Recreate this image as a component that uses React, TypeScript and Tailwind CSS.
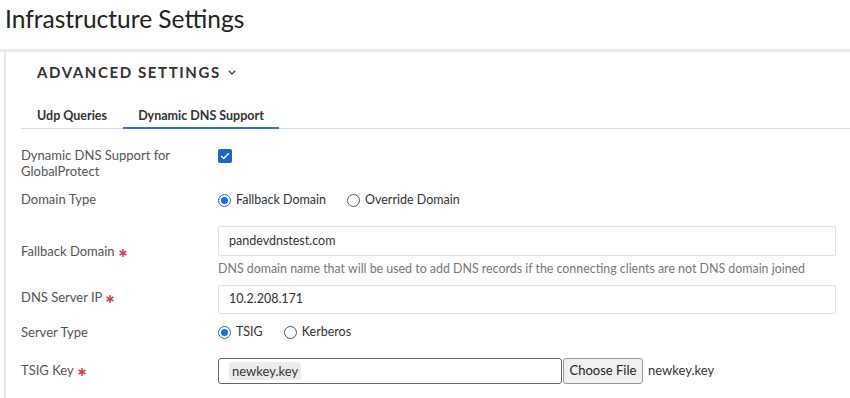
import React from "react";

const Star = () => (
  <svg className="ml-[4px] relative top-[1px]" width="8" height="8" viewBox="0 0 8 8">
    <g stroke="#d64545" strokeWidth="1.6" strokeLinecap="round">
      <path d="M4 0.6v6.8" />
      <path d="M1.05 2.3l5.9 3.4" />
      <path d="M1.05 5.7l5.9-3.4" />
    </g>
  </svg>
);

function Radio({ checked, label }: { checked?: boolean; label: string }) {
  return (
    <span className="flex items-center gap-[5px]">
      {checked ? (
        <span className="w-[13px] h-[13px] rounded-full border-[1.5px] border-[#1a6fe0] flex items-center justify-center bg-white">
          <span className="w-[7px] h-[7px] rounded-full bg-[#1a6fe0]" />
        </span>
      ) : (
        <span className="w-[13px] h-[13px] rounded-full border border-[#555] bg-white" />
      )}
      <span className="text-[12.5px] text-[#333]">{label}</span>
    </span>
  );
}

export default function App() {
  return (
    <div className="w-[850px] h-[398px] bg-white overflow-hidden text-[#555]" style={{ fontFamily: "Lato, 'Open Sans', sans-serif" }}>
      <div className="h-[49px] pl-[5px] pt-[4px] text-[24.5px] leading-[30px] text-[#222]">Infrastructure Settings</div>
      <div className="border-t-[3px] border-[#ececec]">
        <div className="ml-[4px] border-l-2 border-[#e6e6e6] h-[400px] pl-[15px]">
          <div className="pl-[16px] pt-[10px] h-[48px] flex items-start">
            <span className="text-[15px] leading-[20px] font-bold tracking-[1.6px] text-[#333]">ADVANCED SETTINGS</span>
            <svg className="ml-[7px] mt-[8px]" width="8" height="5" viewBox="0 0 8 5"><path d="M0.8 0.8l3.2 3.2L7.2 0.8" fill="none" stroke="#444" strokeWidth="1.3" /></svg>
          </div>
          <div className="flex border-b border-[#dcdcdc] h-[29px] items-end">
            <div className="pl-[16px] w-[102px] h-full flex items-center pt-[4px] text-[12.5px] font-bold text-[#333]">Udp Queries</div>
            <div className="w-[156px] h-full flex items-center pt-[4px] justify-center text-[12.5px] font-bold text-[#333] border-b-2 border-[#2f78c8] mb-[-1px]">Dynamic DNS Support</div>
          </div>
          <div className="grid grid-cols-[197px_618px] text-[13px]">
            <div className="pt-[18px] leading-[16px]">Dynamic DNS Support for<br />GlobalProtect</div>
            <div className="pt-[20px]">
              <span className="w-[14px] h-[14px] rounded-[2px] bg-[#1a66c9] flex items-center justify-center">
                <svg width="10" height="8" viewBox="0 0 10 8"><path d="M1.2 4l2.5 2.4L8.8 1.3" fill="none" stroke="white" strokeWidth="1.4" /></svg>
              </span>
            </div>

            <div className="h-[42px] flex items-center">Domain Type</div>
            <div className="h-[42px] flex items-center gap-[21px]">
              <Radio checked label="Fallback Domain" />
              <Radio label="Override Domain" />
            </div>

            <div className="flex items-center">Fallback Domain<Star /></div>
            <div className="pt-[5px]">
              <div className="h-[30px] border border-[#e0e0e0] rounded-[2px] flex items-center pl-[10px] text-[12.5px] text-[#333]">pandevdnstest.com</div>
              <div className="pt-[4px] h-[26px] text-[12.4px] text-[#777]">DNS domain name that will be used to add DNS records if the connecting clients are not DNS domain joined</div>
            </div>

            <div className="flex items-center">DNS Server IP<Star /></div>
            <div className="pt-[3px]">
              <div className="h-[29px] border border-[#e0e0e0] rounded-[2px] flex items-center pl-[10px] text-[12.5px] text-[#333]">10.2.208.171</div>
            </div>

            <div className="h-[37px] flex items-center">Server Type</div>
            <div className="h-[37px] flex items-center gap-[21px]">
              <Radio checked label="TSIG" />
              <Radio label="Kerberos" />
            </div>

            <div className="h-[39px] flex items-center">TSIG Key<Star /></div>
            <div className="h-[39px] flex items-center">
              <div className="w-[344px] h-[26px] border border-[#666] rounded-[3px] flex items-center pl-[10px]">
                <span className="bg-[#ececec] rounded-[3px] px-[3px] text-[#333] leading-[18px]">newkey.key</span>
              </div>
              <div className="w-[80px] h-[26px] border border-[#999] rounded-[3px] bg-[#f0f0f0] flex items-center justify-center text-[#222] ml-[1px]">Choose File</div>
              <span className="ml-[5px] text-[#333]">newkey.key</span>
            </div>
          </div>
        </div>
      </div>
    </div>
  );
}
